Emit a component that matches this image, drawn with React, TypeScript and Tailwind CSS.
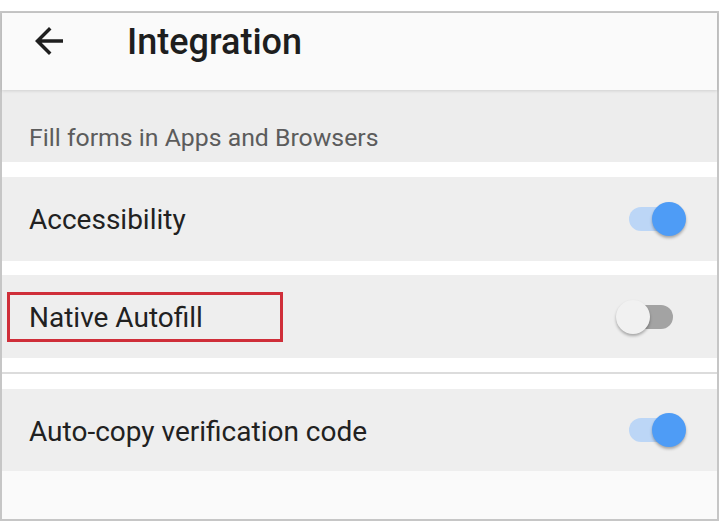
import React from "react";

function Toggle({ on }: { on: boolean }) {
  return (
    <div className="relative w-[70px] h-[34px] shrink-0">
      <div
        className={
          on
            ? "absolute left-[13px] top-[5px] w-[44px] h-[24px] rounded-full bg-[#bcd6f6]"
            : "absolute left-[13px] top-[5px] w-[44px] h-[24px] rounded-full bg-[#a3a3a3]"
        }
      />
      <div
        className={
          on
            ? "absolute left-[36px] top-0 w-[34px] h-[34px] rounded-full bg-[#4e9cf6] shadow-[0_2px_3px_rgba(0,0,0,0.3)]"
            : "absolute left-0 top-0 w-[34px] h-[34px] rounded-full bg-[#f1f1f1] shadow-[0_2px_3px_rgba(0,0,0,0.3)]"
        }
      />
    </div>
  );
}

export default function App() {
  return (
    <div className="w-[720px] h-[522px] bg-white pt-[11px] font-['Roboto','Noto_Sans',sans-serif]">
      <div className="w-[719px] h-[510px] border-2 border-[#c6c6c6] flex flex-col bg-white">
        <div className="relative z-10 h-[77px] shrink-0 bg-[#fafafa] shadow-[0_1px_3px_rgba(0,0,0,0.12)] flex items-start pt-[7px] pl-[26px]">
          <svg width="42" height="42" viewBox="0 0 24 24" className="shrink-0">
            <path
              d="M20 11H7.83l5.59-5.59L12 4l-8 8 8 8 1.41-1.41L7.83 13H20v-2z"
              fill="#1f1f1f"
            />
          </svg>
          <div className="ml-[57px] mt-[4px] text-[36px] leading-[36px] font-medium text-[#1e1e1e]">
            Integration
          </div>
        </div>
        <div className="h-[72px] shrink-0 bg-[#ededed] pt-[35px] pl-[27px] text-[24.8px] leading-[25px] text-[#5c5c5c]">
          Fill forms in Apps and Browsers
        </div>
        <div className="h-[15px] shrink-0 bg-white" />
        <div className="h-[84px] shrink-0 bg-[#eeeeee] flex items-center justify-between pl-[27px] pr-[31px]">
          <span className="text-[28px] leading-[28px] pt-[2px] text-[#212121]">Accessibility</span>
          <Toggle on={true} />
        </div>
        <div className="h-[14px] shrink-0 bg-white" />
        <div className="h-[83px] shrink-0 bg-[#eeeeee] flex items-center justify-between pl-[5px] pr-[31px]">
          <div className="w-[276px] h-[50px] border-[3px] border-[#cf2e39] flex items-center pl-[19px]">
            <span className="text-[28px] leading-[28px] pt-[2px] text-[#212121]">Native Autofill</span>
          </div>
          <Toggle on={false} />
        </div>
        <div className="h-[14px] shrink-0 bg-white" />
        <div className="h-[2px] shrink-0 bg-[#dcdcdc]" />
        <div className="h-[15px] shrink-0 bg-white" />
        <div className="h-[82px] shrink-0 bg-[#eeeeee] flex items-center justify-between pl-[27px] pr-[31px]">
          <span className="text-[28px] leading-[28px] pt-[4px] text-[#212121]">Auto-copy verification code</span>
          <Toggle on={true} />
        </div>
        <div className="flex-1 bg-[#fafafa]" />
      </div>
    </div>
  );
}
